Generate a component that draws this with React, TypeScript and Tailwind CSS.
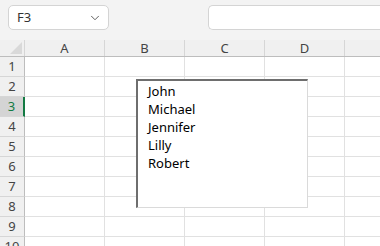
import { ChevronDown } from "lucide-react";

const columns = ["A", "B", "C", "D", ""];
const rows = [1, 2, 3, 4, 5, 6, 7, 8, 9, 10];
const names = ["John", "Michael", "Jennifer", "Lilly", "Robert"];

export default function App() {
  return (
    <div className="relative w-[380px] h-[246px] overflow-hidden bg-white font-['Noto_Sans',sans-serif] text-[13px] text-[#222]">
      {/* toolbar */}
      <div className="h-[40px] bg-[#f3f3f3] flex items-start pt-[5px] pl-[8px] gap-[99px]">
        <div className="w-[101px] h-[25px] bg-white border border-[#d4d4d4] rounded-[5px] flex items-center justify-between pl-[8px] pr-[6px]">
          <span className="text-[#333]">F3</span>
          <ChevronDown className="w-[14px] h-[14px] text-[#555]" strokeWidth={1.6} />
        </div>
        <div className="flex-1 h-[25px] bg-white border border-[#d4d4d4] rounded-l-[5px] border-r-0" />
      </div>

      {/* column headers */}
      <div className="flex h-[17px] bg-[#f0f0f0] border-b border-[#bdbdbd]">
        <div className="w-[25px] shrink-0 border-r border-[#d6d6d6] relative">
          <div className="absolute right-[2px] bottom-[2px] w-0 h-0 border-l-[12px] border-l-transparent border-b-[12px] border-b-[#d9d9d9]" />
        </div>
        {columns.map((c, i) => (
          <div key={i} className="w-[80px] shrink-0 border-r border-[#d6d6d6] flex items-center justify-center leading-none text-[#444]">
            {c}
          </div>
        ))}
      </div>

      {/* rows */}
      {rows.map((r) => (
        <div key={r} className="flex h-[20px]">
          <div
            className={
              r === 3
                ? "w-[25px] shrink-0 bg-[#d4d4d4] border-r-2 border-[#137a43] border-b border-b-[#d6d6d6] flex items-center justify-center text-[#137a43]"
                : "w-[25px] shrink-0 bg-[#f0f0f0] border-r border-[#bdbdbd] border-b border-b-[#d6d6d6] flex items-center justify-center text-[#444]"
            }
          >
            {r}
          </div>
          {columns.map((_, i) => (
            <div key={i} className="w-[80px] shrink-0 border-r border-b border-[#e1e1e1]" />
          ))}
        </div>
      ))}

      {/* list box */}
      <div className="absolute left-[136px] top-[79px] w-[172px] h-[129px] bg-white border-t-2 border-l-2 border-t-[#6e6e6e] border-l-[#6e6e6e] border-r border-b border-r-[#dadada] border-b-[#dadada] pl-[10px] pt-[1px]">
        {names.map((n) => (
          <div key={n} className="h-[18px] leading-[18px] text-black">
            {n}
          </div>
        ))}
      </div>
    </div>
  );
}
